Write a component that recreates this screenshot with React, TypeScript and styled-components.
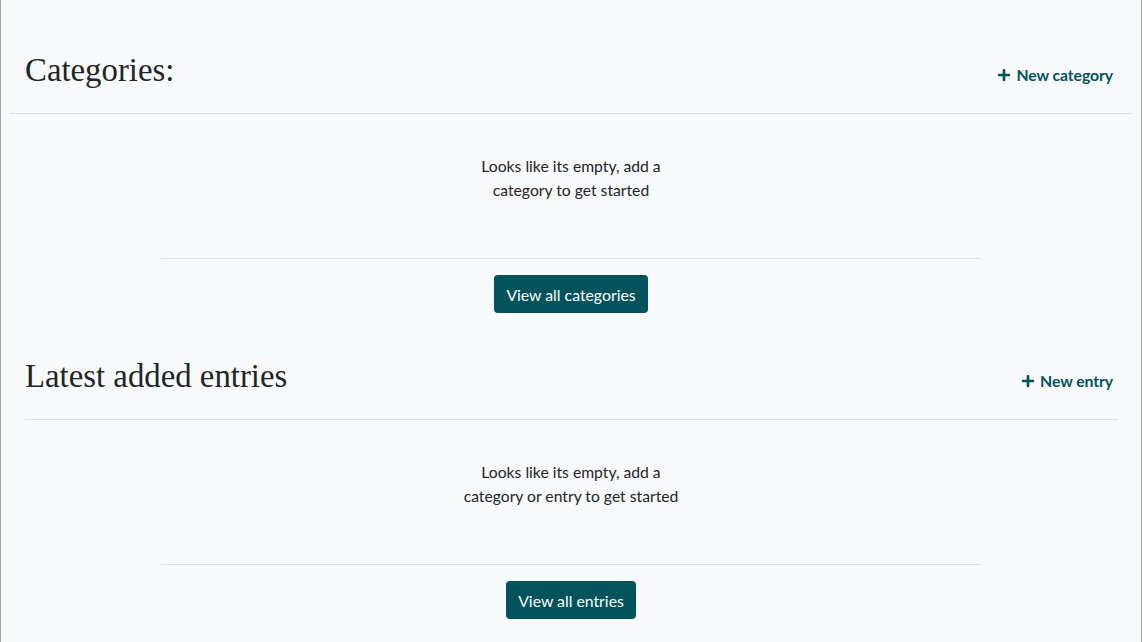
import React from "react";
import styled, { createGlobalStyle } from "styled-components";
import { FaPlus } from "react-icons/fa";

const GlobalStyle = createGlobalStyle`
  html, body {
    margin: 0;
    padding: 0;
    background: #f8f9fa;
  }
  body {
    font-family: Lato, "Open Sans", sans-serif;
    color: #212529;
  }
  * { box-sizing: border-box; }
`;

const Page = styled.main`
  height: 642px;
  overflow: hidden;
  background: #f8f9fa;
  border-left: 1px solid #a3a6a3;
  border-right: 1px solid #a3a6a3;
  padding-top: 7px;
`;

const Section = styled.section`
  display: flex;
  flex-direction: column;
`;

const Header = styled.header<{ $wide?: boolean }>`
  display: flex;
  align-items: center;
  justify-content: space-between;
  margin: ${(p) => (p.$wide ? "0 9px 0 9px" : "0 23px 0 24px")};
  padding: ${(p) => (p.$wide ? "44px 19px 23px 15px" : "44px 5px 23px 0")};
  border-bottom: 1px solid #dee2e6;
`;

const Title = styled.h2`
  margin: 0;
  font-family: "Liberation Serif", "Times New Roman", serif;
  font-weight: 400;
  font-size: 32.8px;
  line-height: 39px;
  color: #212529;
`;

const AddLink = styled.a`
  display: inline-flex;
  align-items: center;
  gap: 5px;
  font-family: Lato, sans-serif;
  font-weight: 700;
  font-size: 15.8px;
  line-height: 20px;
  letter-spacing: -0.1px;
  color: #02535b;
  text-decoration: none;
  cursor: pointer;
  margin-top: 8px;
  svg {
    width: 14px;
    height: 14px;
  }
`;

const Empty = styled.p`
  margin: 40px auto 0;
  width: 232px;
  text-align: center;
  font-size: 15.7px;
  line-height: 24px;
  color: #212529;
`;

const Footer = styled.div`
  margin: 56px 160px 0;
  padding-top: 16px;
  border-top: 1px solid #dee2e6;
  display: flex;
  justify-content: center;
`;

const Button = styled.button`
  height: 38px;
  padding: 0 12px;
  border: none;
  border-radius: 4px;
  background: #02535b;
  color: #ffffff;
  font-family: Lato, sans-serif;
  font-size: 15.8px;
  cursor: pointer;
`;

export default function App() {
  return (
    <>
      <GlobalStyle />
      <Page>
        <Section>
          <Header $wide>
            <Title>Categories:</Title>
            <AddLink>
              <FaPlus />
              New category
            </AddLink>
          </Header>
          <Empty>Looks like its empty, add a category to get started</Empty>
          <Footer>
            <Button>View all categories</Button>
          </Footer>
        </Section>
        <Section>
          <Header>
            <Title>Latest added entries</Title>
            <AddLink>
              <FaPlus />
              New entry
            </AddLink>
          </Header>
          <Empty>Looks like its empty, add a category or entry to get started</Empty>
          <Footer>
            <Button>View all entries</Button>
          </Footer>
        </Section>
      </Page>
    </>
  );
}
